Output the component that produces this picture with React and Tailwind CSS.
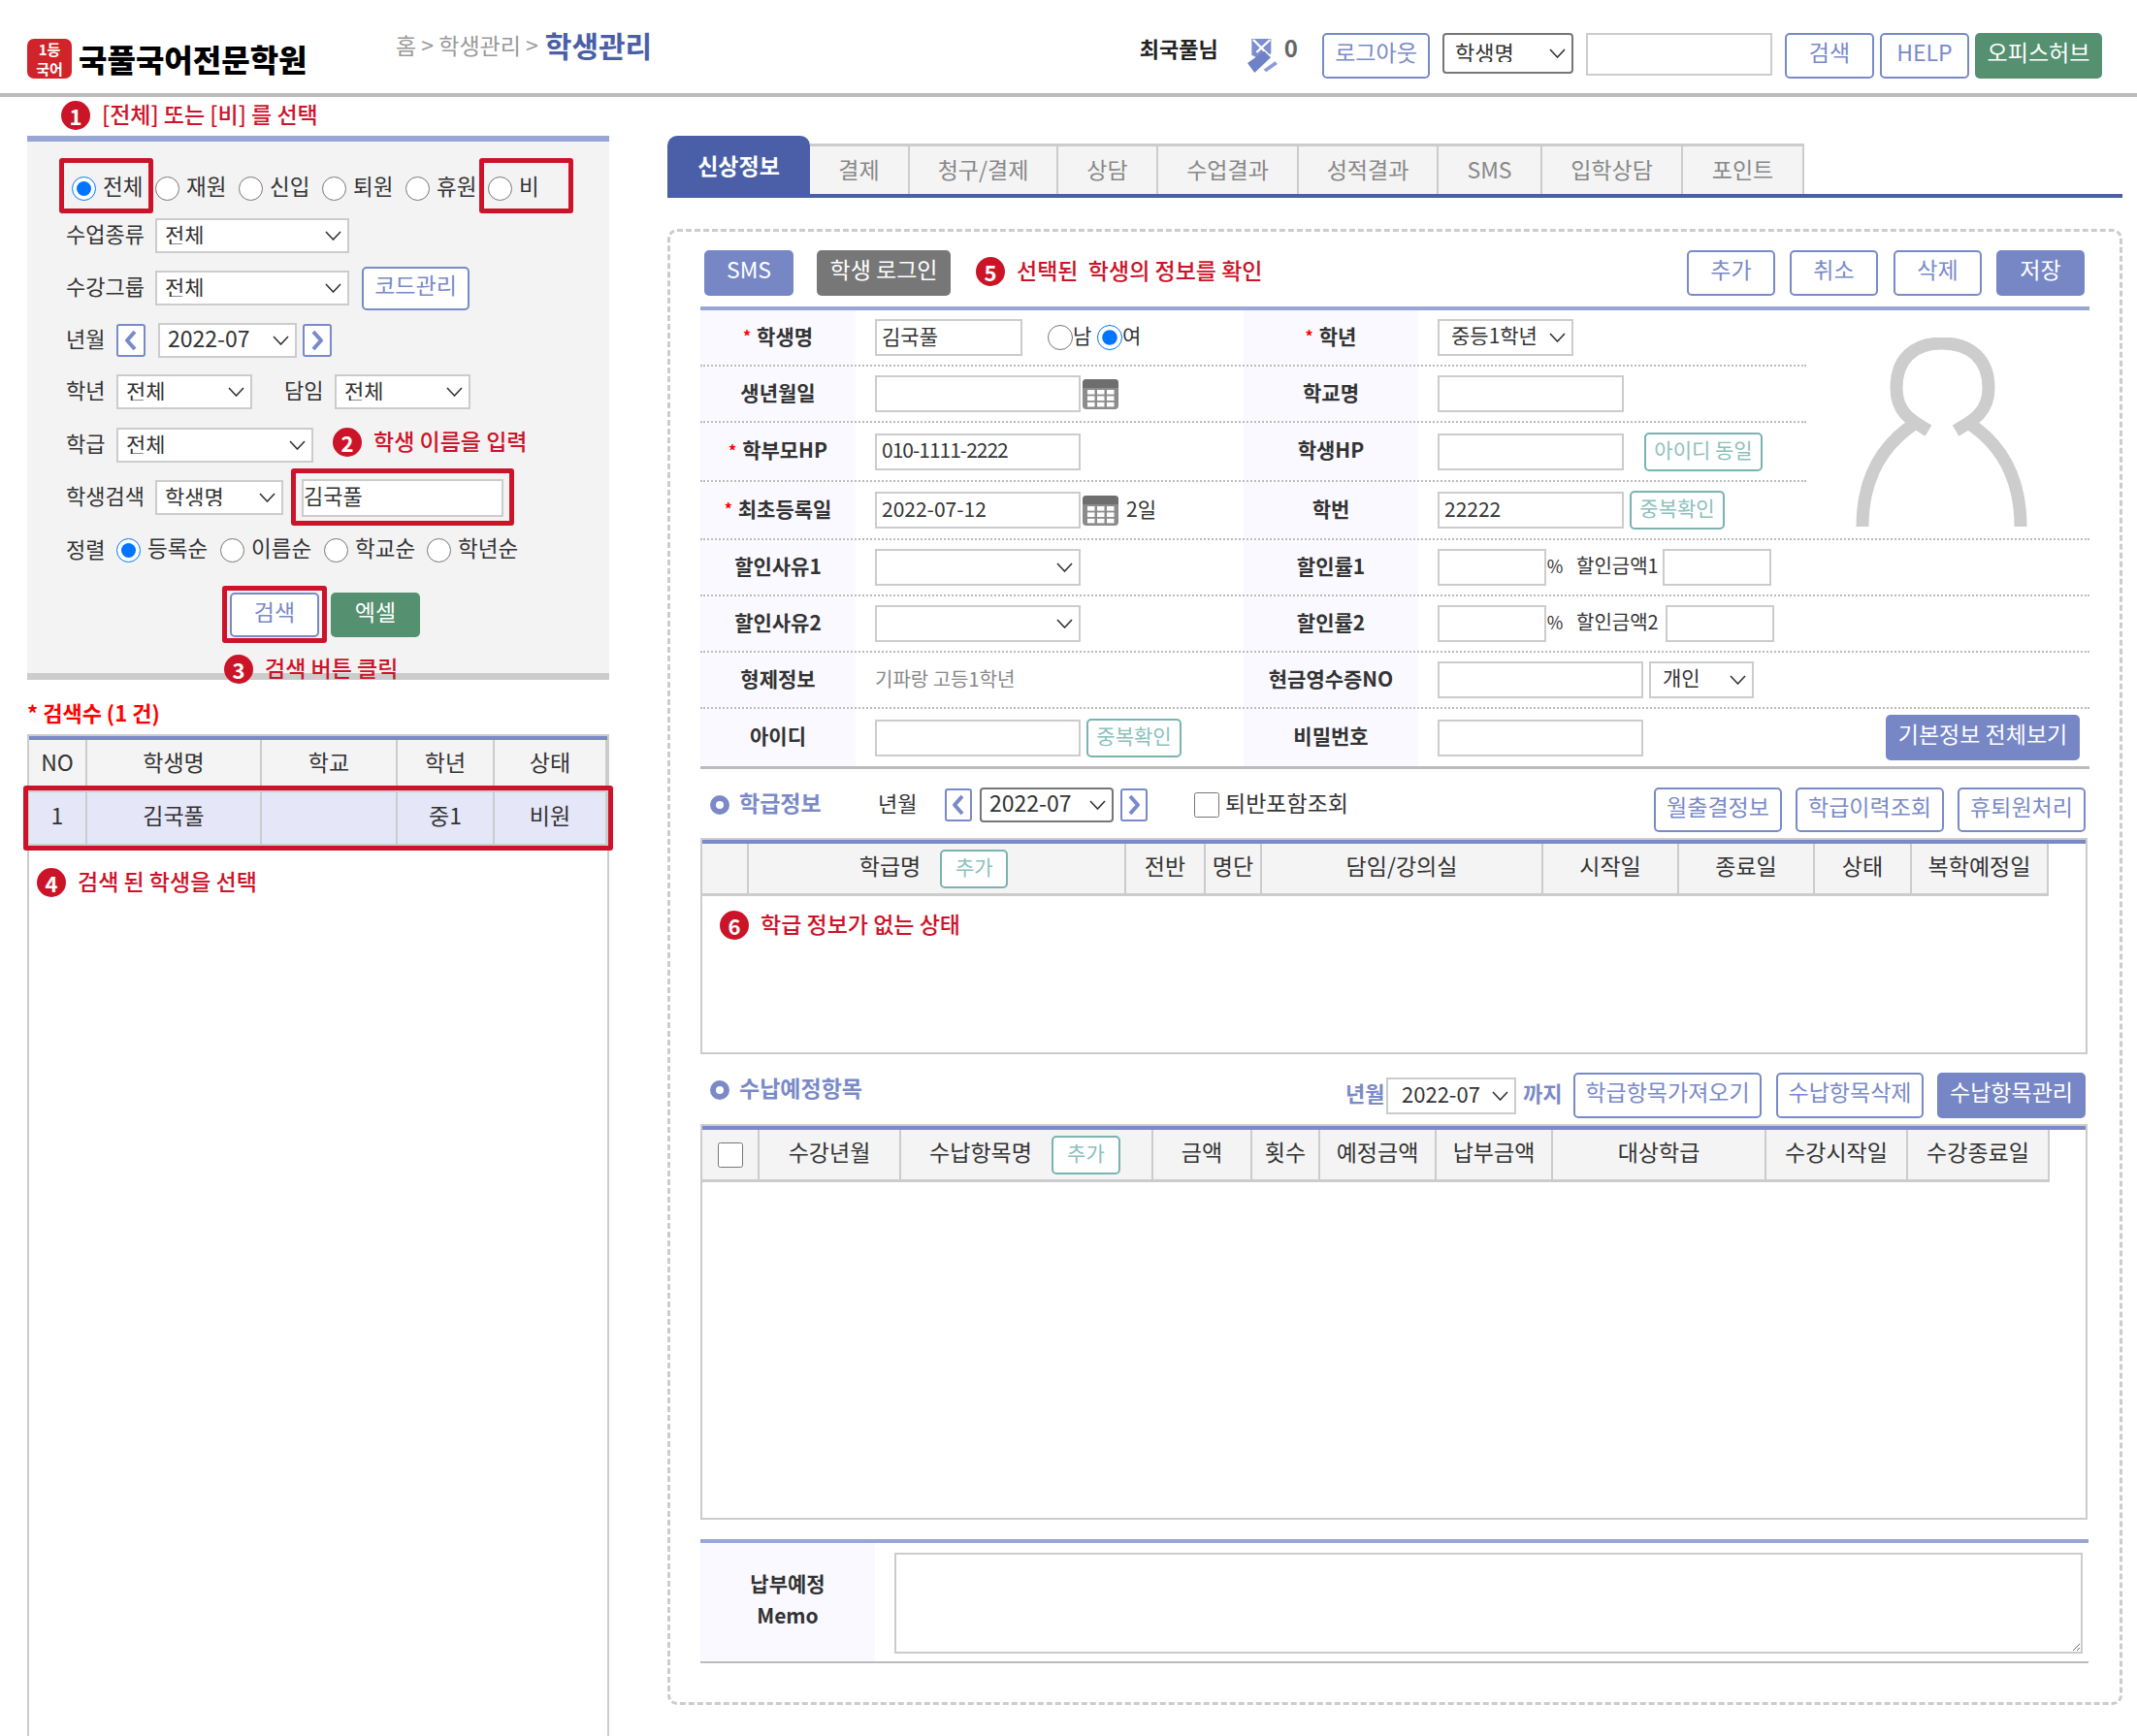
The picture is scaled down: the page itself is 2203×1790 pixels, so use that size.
import React from "react";

const outline = "flex shrink-0 items-center justify-center rounded-[5px] border-2 border-[#7a8ac8] bg-white pb-[8px] text-[23px] leading-none text-[#7a8ac8] whitespace-nowrap";
const fill = "flex shrink-0 items-center justify-center rounded-[5px] bg-[#7787c6] pb-[8px] text-[23px] leading-none text-white whitespace-nowrap";
const green = "flex shrink-0 items-center justify-center rounded-[5px] bg-[#559070] pb-[8px] text-[23px] leading-none text-white whitespace-nowrap";
const teal = "flex shrink-0 items-center justify-center rounded-[5px] border-2 border-[#7ab3b0] bg-white pb-[5px] text-[21px] leading-none text-[#8cc0bd] whitespace-nowrap";
const redBox = "pointer-events-none absolute rounded-[3px] border-[5px] border-[#cd1329]";
const fieldBase = "shrink-0 border-2 border-[#ccc] bg-white px-[5px] pb-[5px] text-[21px] leading-none text-[#333]";
const th = "flex items-center justify-center border-r-2 border-[#ccc] pb-[7px] text-[23px] leading-none text-[#333] whitespace-nowrap";

function Sel({ className, dark = false, size = "text-[22px] pl-[8px]", value }) {
  const border = dark ? "rounded-[4px] border-[#777]" : "border-[#ccc]";
  return (
    <span className={"relative flex shrink-0 " + className}>
      <select defaultValue={value} className={"h-full w-full appearance-none border-2 bg-white pb-[5px] leading-none text-[#333] " + border + " " + size}>
        <option>{value}</option>
      </select>
      <svg width="17" height="10" viewBox="0 0 17 10" fill="none" stroke="#333" strokeWidth="1.6" className="pointer-events-none absolute right-[8px] top-1/2 -translate-y-1/2">
        <polyline points="1,1 8.5,9 16,1" />
      </svg>
    </span>
  );
}

function Badge({ n }) {
  return (
    <span className="flex h-[30px] w-[30px] shrink-0 items-center justify-center rounded-full bg-[#cc1428] text-[22px] font-bold leading-none text-white">
      {n}
    </span>
  );
}

function Note({ n, children, className }) {
  return (
    <div className={"flex h-[30px] items-center " + className}>
      <Badge n={n} />
      <span className="ml-[12px] pb-[3px] text-[23px] font-medium leading-none whitespace-nowrap text-[#cd1329]">{children}</span>
    </div>
  );
}

function Radio({ checked, label, labelW, className = "" }) {
  return (
    <label className={"flex shrink-0 items-center " + className}>
      <input type="radio" defaultChecked={checked} className="m-0 h-[25px] w-[25px] shrink-0" />
      <span className={"ml-[7px] pb-[7px] text-[22.5px] leading-none text-[#333] whitespace-nowrap " + labelW}>{label}</span>
    </label>
  );
}

function Arrow({ dir, className }) {
  return (
    <span className={"flex shrink-0 items-center justify-center rounded-[3px] border-2 border-[#7a8ac8] bg-white " + className}>
      <svg width="14" height="22" viewBox="0 0 14 22" fill="none" stroke="#7a8ac8" strokeWidth="4" strokeLinejoin="round">
        {dir === "l" ? <polyline points="11,2 3,11 11,20" /> : <polyline points="3,2 11,11 3,20" />}
      </svg>
    </span>
  );
}

function Lbl({ children, className = "" }) {
  return <span className={"shrink-0 pb-[6px] text-[22px] leading-none text-[#333] whitespace-nowrap " + className}>{children}</span>;
}

function Calendar() {
  const cells = [];
  for (let r = 0; r < 3; r++) for (let c = 0; c < 3; c++) cells.push(<rect key={r + "-" + c} x={5 + c * 10} y={11 + r * 6.4} width="7.5" height="4.6" fill="#fff" />);
  return (
    <svg width="37" height="31" viewBox="0 0 37 31" className="ml-[2px] shrink-0">
      <rect x="0" y="0" width="37" height="31" rx="4" fill="#8c8c8c" />
      <path d="M0 9V4a4 4 0 0 1 4-4h29a4 4 0 0 1 4 4v5z" fill="#6e6e6e" />
      {cells}
    </svg>
  );
}

function Ribbon() {
  return (
    <svg width="31" height="35" viewBox="0 0 93 105" className="shrink-0">
      <polygon points="13,0 73,0 73,45 43,65 13,50" fill="#7d8ed0" />
      <path d="M18 3L70 55M70 3L28 42" stroke="#fff" strokeWidth="7" />
      <polygon points="0,75 52,38 72,58 22,105" fill="#6f82c8" />
      <polygon points="50,95 85,70 93,78 58,103" fill="#8c9bd6" />
    </svg>
  );
}

function Avatar() {
  return (
    <svg width="177" height="195" viewBox="0 0 177 195" fill="none" stroke="#cdcdcd" strokeWidth="13" className="ml-[51px] mt-[28px] shrink-0">
      <path d="M75 96C58 86 42 78 42 52C42 22 60 6 89 6C118 6 137 22 137 52C137 78 120 86 103 96" />
      <path d="M62 88C28 110 7 145 7 195" />
      <path d="M116 88C150 110 170 145 170 195" />
    </svg>
  );
}

function FormLabel({ req, w, children }) {
  return (
    <div className={"flex shrink-0 items-center justify-center bg-[#f9f9ff] pb-[4px] text-[21px] font-bold leading-none text-[#333] whitespace-nowrap " + w}>
      {req && <span className="mr-[6px] text-[16px] text-[#f00]">*</span>}
      {children}
    </div>
  );
}

function Row({ h, dotted = true, full = false, l1, req1, c1, l2, req2, c2, last = false }) {
  return (
    <div className={"flex " + h + (dotted ? " border-b-2 border-dotted border-[#bbb]" : "") + (last ? " border-b-[3px] border-[#bbb]" : "")}>
      <FormLabel req={req1} w="w-[160px]">{l1}</FormLabel>
      <div className="flex w-[400px] shrink-0 items-center pl-[20px]">{c1}</div>
      <FormLabel req={req2} w="w-[180px]">{l2}</FormLabel>
      <div className={"flex items-center pl-[20px] " + (full ? "flex-1" : "w-[400px] shrink-0")}>{c2}</div>
    </div>
  );
}

const cols1 = ["", "학급명", "전반", "명단", "담임/강의실", "시작일", "종료일", "상태", "복학예정일"];
const w1 = ["w-[48px]", "w-[389px] pr-[6px]", "w-[82px]", "w-[58px]", "w-[290px]", "w-[140px]", "w-[140px]", "w-[100px]", "w-[141px]"];
const cols2 = ["", "수강년월", "수납항목명", "금액", "횟수", "예정금액", "납부금액", "대상학급", "수강시작일", "수강종료일"];
const w2 = ["w-[59px]", "w-[146px]", "w-[260px] pr-[3px]", "w-[102px]", "w-[70px]", "w-[120px]", "w-[120px]", "w-[220px]", "w-[146px]", "w-[146px]"];

function Bullet() {
  return <span className="h-[20px] w-[20px] shrink-0 rounded-full border-[6px] border-[#7a8ac8] bg-white" />;
}

export default function App() {
  return (
    <div className="h-[1790px] w-[2203px] overflow-hidden bg-white font-['Noto_Sans_CJK_KR','Noto_Sans',sans-serif] text-[#333] proportional-nums">
      <header className="flex h-[100px] w-full border-b-4 border-[#bbb]">
        <div className="ml-[28px] mt-[40px] flex h-[41px] w-[46px] shrink-0 flex-col items-center justify-center rounded-[7px] bg-[#d2232a] text-[15px] font-bold leading-[20px] text-white">
          <span className="whitespace-nowrap">1등</span>
          <span className="whitespace-nowrap">국어</span>
        </div>
        <div className="ml-[7px] mt-[38px] w-[242px] shrink-0 text-[32px] font-black leading-[44px] text-black whitespace-nowrap">국풀국어전문학원</div>
        <div className="ml-[85px] mt-[26px] flex h-[40px] shrink-0 items-center whitespace-nowrap">
          <span className="text-[23px] text-[#999]">홈 &gt; 학생관리 &gt;</span>
          <span className="ml-[7px] text-[30px] font-bold text-[#4a5fa8]">학생관리</span>
        </div>
        <div className="ml-auto mr-[36px] mt-[34px] flex items-start">
          <span className="mt-[1px] w-[111px] shrink-0 text-[22px] font-bold leading-[28px] text-[#222] whitespace-nowrap">최국풀님</span>
          <span className="mt-[6px] flex"><Ribbon /></span>
          <span className="ml-[7px] mt-[1px] text-[24px] font-bold leading-[28px] text-[#666]">0</span>
          <button className={outline + " ml-[25px] h-[47px] w-[111px]"}>로그아웃</button>
          <Sel dark size="text-[22px] pl-[11px]" value="학생명" className="ml-[13px] h-[42px] w-[135px]" />
          <input className={fieldBase + " ml-[13px] h-[44px] w-[192px]"} />
          <button className={outline + " ml-[13px] h-[47px] w-[92px]"}>검색</button>
          <button className={outline + " ml-[6px] h-[47px] w-[92px]"}>HELP</button>
          <button className={green + " ml-[6px] h-[47px] w-[131px]"}>오피스허브</button>
        </div>
      </header>

      <main className="flex">
        <aside className="ml-[28px] flex w-[600px] shrink-0 flex-col">
          <Note n="1" className="ml-[35px] mt-[4px]">[전체] 또는 [비] 를 선택</Note>
          <section className="relative mt-[6px] h-[561px] border-b-[7px] border-t-[6px] border-b-[#ccc] border-t-[#98a6d4] bg-[#f3f3f3]">
            <div className="ml-[46px] mt-[36px] flex h-[25px]">
              <Radio checked label="전체" labelW="w-[54px]" />
              <Radio label="재원" labelW="w-[54px]" />
              <Radio label="신입" labelW="w-[54px]" />
              <Radio label="퇴원" labelW="w-[54px]" />
              <Radio label="휴원" labelW="w-[53px]" />
              <Radio label="비" labelW="w-[30px]" />
            </div>
            <div className="ml-[40px] mt-[18px] flex h-[36px] items-center">
              <Lbl className="w-[92px]">수업종류</Lbl>
              <Sel value="전체" className="h-[36px] w-[200px]" />
            </div>
            <div className="ml-[40px] mt-[18px] flex h-[36px] items-center">
              <Lbl className="w-[92px]">수강그룹</Lbl>
              <Sel value="전체" className="h-[36px] w-[200px]" />
              <button className={outline + " ml-[13px] h-[45px] w-[111px]"}>코드관리</button>
            </div>
            <div className="ml-[40px] mt-[18px] flex h-[36px] items-center">
              <Lbl className="w-[52px]">년월</Lbl>
              <Arrow dir="l" className="h-[34px] w-[30px]" />
              <Sel value="2022-07" size="text-[23px] pl-[8px]" className="ml-[13px] h-[36px] w-[143px]" />
              <Arrow dir="r" className="ml-[6px] h-[34px] w-[30px]" />
            </div>
            <div className="ml-[40px] mt-[17px] flex h-[36px] items-center">
              <Lbl className="w-[52px]">학년</Lbl>
              <Sel value="전체" className="h-[36px] w-[140px]" />
              <Lbl className="ml-[33px] w-[52px]">담임</Lbl>
              <Sel value="전체" className="h-[36px] w-[140px]" />
            </div>
            <div className="ml-[40px] mt-[19px] flex h-[36px] items-center">
              <Lbl className="w-[52px]">학급</Lbl>
              <Sel value="전체" className="h-[36px] w-[203px]" />
              <Note n="2" className="-mt-[6px] ml-[20px]">학생 이름을 입력</Note>
            </div>
            <div className="ml-[40px] mt-[18px] flex h-[36px] items-center">
              <Lbl className="w-[92px]">학생검색</Lbl>
              <Sel value="학생명" className="h-[36px] w-[132px]" />
              <input defaultValue="김국풀" className="ml-[19px] h-[39px] w-[208px] shrink-0 border-2 border-[#ccc] bg-white pb-[7px] text-[22px] leading-none text-[#333]" />
            </div>
            <div className="ml-[40px] mt-[24px] flex h-[25px] items-center">
              <Lbl className="w-[52px]">정렬</Lbl>
              <Radio checked label="등록순" labelW="w-[75px]" />
              <Radio label="이름순" labelW="w-[75px]" />
              <Radio label="학교순" labelW="w-[74px]" />
              <Radio label="학년순" labelW="w-[70px]" />
            </div>
            <div className="ml-[209px] mt-[31px] flex">
              <button className={outline + " h-[46px] w-[92px]"}>검색</button>
              <button className={green + " ml-[12px] h-[46px] w-[92px]"}>엑셀</button>
            </div>
            <Note n="3" className="ml-[203px] mt-[18px]">검색 버튼 클릭</Note>
            <div className={redBox + " left-[33px] top-[17px] h-[57px] w-[97px]"} />
            <div className={redBox + " left-[466px] top-[17px] h-[57px] w-[97px]"} />
            <div className={redBox + " left-[272px] top-[337px] h-[59px] w-[230px]"} />
            <div className={redBox + " left-[201px] top-[458px] h-[59px] w-[108px]"} />
          </section>

          <div className="mt-[19px] h-[28px] text-[22px] font-bold leading-[28px] text-[#f00] whitespace-nowrap">* 검색수 (1 건)</div>
          <section className="relative mt-[9px] h-[1033px] border-x-2 border-t-2 border-[#ccc]">
            <div className="border-t-4 border-[#7a8ac8]">
              <div className="flex h-[54px] border-b-[3px] border-[#ccc] bg-[#f4f4f4]">
                <div className={th + " w-[60px]"}>NO</div>
                <div className={th + " w-[180px]"}>학생명</div>
                <div className={th + " w-[140px]"}>학교</div>
                <div className={th + " w-[100px]"}>학년</div>
                <div className={th + " flex-1 border-r-0"}>상태</div>
              </div>
              <div className="flex h-[55px] border-b-2 border-[#ccc] bg-[#e5e6f8]">
                <div className={th + " w-[60px]"}>1</div>
                <div className={th + " w-[180px]"}>김국풀</div>
                <div className={th + " w-[140px]"}></div>
                <div className={th + " w-[100px]"}>중1</div>
                <div className={th + " flex-1 border-r-0"}>비원</div>
              </div>
            </div>
            <Note n="4" className="ml-[8px] mt-[23px]">검색 된 학생을 선택</Note>
            <div className={redBox + " -left-[6px] top-[51px] h-[67px] w-[608px]"} />
          </section>
        </aside>

        <div className="ml-[60px] mt-[40px] flex w-[1500px] shrink-0 flex-col">
          <nav className="flex h-[64px] items-end border-b-4 border-[#4a5fa8]">
            <div className="flex h-[60px] w-[147px] items-center justify-center rounded-t-[10px] bg-[#4a5fa8] text-[23px] font-bold leading-none text-white">신상정보</div>
            {[["결제", "w-[103px]"], ["청구/결제", "w-[153px]"], ["상담", "w-[103px]"], ["수업결과", "w-[145px]"], ["성적결과", "w-[144px]"], ["SMS", "w-[107px]"], ["입학상담", "w-[145px]"], ["포인트", "w-[125px]"]].map(([t, w]) => (
              <div key={t} className={"flex h-[52px] items-center justify-center border-r-2 border-t-[3px] border-[#ccc] bg-[#f4f4f4] pb-[2px] text-[23px] leading-none text-[#888] " + w}>{t}</div>
            ))}
          </nav>

          <div className="mt-[32px] h-[1522px] rounded-[10px] border-[3px] border-dashed border-[#ccc] pl-[31px]">
            <div className="w-[1432px]">
              <div className="mt-[19px] flex h-[47px] items-stretch pl-[4px] pr-[5px]">
                <button className={fill + " w-[92px]"}>SMS</button>
                <button className="ml-[24px] flex w-[138px] shrink-0 items-center justify-center rounded-[5px] bg-[#777] pb-[8px] text-[23px] leading-none text-white whitespace-nowrap">학생 로그인</button>
                <Note n="5" className="-mt-[3px] ml-[26px] self-center">선택된&nbsp; 학생의 정보를 확인</Note>
                <button className={outline + " ml-auto w-[91px]"}>추가</button>
                <button className={outline + " ml-[15px] w-[91px]"}>취소</button>
                <button className={outline + " ml-[16px] w-[91px]"}>삭제</button>
                <button className={fill + " ml-[15px] w-[91px]"}>저장</button>
              </div>

              <div className="mt-[11px] border-t-4 border-[#98a6d4]">
                <div className="flex border-b-2 border-dotted border-[#bbb]">
                  <div className="w-[1140px] shrink-0">
                    <Row h="h-[58px]" req1 l1="학생명" req2 l2="학년"
                      c1={<>
                        <input defaultValue="김국풀" className={fieldBase + " h-[38px] w-[152px]"} />
                        <input type="radio" name="g" className="m-0 ml-[26px] h-[26px] w-[26px]" />
                        <span className="w-[25px] pb-[6px] text-[21px] leading-none">남</span>
                        <input type="radio" name="g" defaultChecked className="m-0 h-[26px] w-[26px]" />
                        <span className="pb-[6px] text-[21px] leading-none">여</span>
                      </>}
                      c2={<Sel size="text-[21px] pl-[12px]" value="중등1학년" className="h-[38px] w-[140px]" />} />
                    <Row h="h-[58px]" l1="생년월일" l2="학교명"
                      c1={<><input className={fieldBase + " h-[38px] w-[212px]"} /><Calendar /></>}
                      c2={<input className={fieldBase + " h-[38px] w-[192px]"} />} />
                    <Row h="h-[61px]" req1 l1="학부모HP" l2="학생HP"
                      c1={<input defaultValue="010-1111-2222" className={fieldBase + " h-[38px] w-[212px] tracking-[-1px]"} />}
                      c2={<><input className={fieldBase + " h-[38px] w-[192px]"} /><button className={teal + " ml-[21px] h-[40px] w-[122px]"}>아이디 동일</button></>} />
                    <Row h="h-[58px]" dotted={false} req1 l1="최초등록일" l2="학번"
                      c1={<><input defaultValue="2022-07-12" className={fieldBase + " h-[38px] w-[212px]"} /><Calendar /><span className="ml-[8px] pb-[4px] text-[21px] leading-none">2일</span></>}
                      c2={<><input defaultValue="22222" className={fieldBase + " h-[38px] w-[192px]"} /><button className={teal + " ml-[6px] h-[40px] w-[98px]"}>중복확인</button></>} />
                  </div>
                  <Avatar />
                </div>
                <Row h="h-[58px]" full l1="할인사유1" l2="할인률1"
                  c1={<Sel value="" className="h-[38px] w-[212px]" />}
                  c2={<><input className={fieldBase + " h-[38px] w-[112px]"} /><span className="w-[18px] shrink-0 pb-[4px] text-center text-[18px] leading-none">%</span><span className="ml-[13px] w-[89px] shrink-0 pb-[4px] text-[20px] leading-none whitespace-nowrap">할인금액1</span><input className={fieldBase + " h-[38px] w-[112px]"} /></>} />
                <Row h="h-[58px]" full l1="할인사유2" l2="할인률2"
                  c1={<Sel value="" className="h-[38px] w-[212px]" />}
                  c2={<><input className={fieldBase + " h-[38px] w-[112px]"} /><span className="w-[18px] shrink-0 pb-[4px] text-center text-[18px] leading-none">%</span><span className="ml-[13px] w-[92px] shrink-0 pb-[4px] text-[20px] leading-none whitespace-nowrap">할인금액2</span><input className={fieldBase + " h-[38px] w-[112px]"} /></>} />
                <Row h="h-[58px]" full l1="형제정보" l2="현금영수증NO"
                  c1={<span className="pb-[2px] text-[20px] leading-none text-[#888] whitespace-nowrap">기파랑 고등1학년</span>}
                  c2={<><input className={fieldBase + " h-[38px] w-[212px]"} /><Sel size="text-[21px] pl-[12px]" value="개인" className="ml-[6px] h-[38px] w-[108px]" /></>} />
                <Row h="h-[62px]" full dotted={false} last l1="아이디" l2="비밀번호"
                  c1={<><input className={fieldBase + " h-[38px] w-[212px]"} /><button className={teal + " ml-[6px] h-[40px] w-[98px]"}>중복확인</button></>}
                  c2={<><input className={fieldBase + " h-[38px] w-[212px]"} /><button className={fill + " ml-auto mr-[10px] h-[47px] w-[200px]"}>기본정보 전체보기</button></>} />
              </div>

              <div className="mt-[19px] flex h-[46px] items-start pl-[10px] pr-[4px]">
                <div className="flex h-[36px] items-center">
                  <Bullet />
                  <span className="ml-[10px] w-[83px] shrink-0 pb-[6px] text-[23px] font-bold leading-none text-[#7a8ac8] whitespace-nowrap">학급정보</span>
                  <Lbl className="ml-[60px] w-[40px]">년월</Lbl>
                  <Arrow dir="l" className="ml-[29px] h-[34px] w-[28px]" />
                  <Sel dark size="text-[23px] pl-[8px]" value="2022-07" className="ml-[8px] h-[36px] w-[138px]" />
                  <Arrow dir="r" className="ml-[7px] h-[34px] w-[28px]" />
                  <input type="checkbox" className="m-0 ml-[48px] h-[26px] w-[26px] shrink-0" />
                  <span className="ml-[6px] shrink-0 pb-[5px] text-[23px] leading-none whitespace-nowrap">퇴반포함조회</span>
                </div>
                <button className={outline + " ml-auto h-[46px] w-[132px]"}>월출결정보</button>
                <button className={outline + " ml-[14px] h-[46px] w-[153px]"}>학급이력조회</button>
                <button className={outline + " ml-[14px] h-[46px] w-[132px]"}>휴퇴원처리</button>
              </div>

              <div className="mt-[6px] h-[223px] w-[1430px] border-2 border-[#ccc]">
                <div className="border-t-4 border-[#7a8ac8]">
                  <div className="flex h-[54px] w-[1388px] border-b-[3px] border-[#ccc] bg-[#f4f4f4]">
                    {cols1.map((c, i) => (
                      <div key={i} className={th + " " + w1[i]}>
                        {c}
                        {i === 1 && <button className={teal + " -mb-[7px] ml-[20px] h-[40px] w-[70px]"}>추가</button>}
                      </div>
                    ))}
                  </div>
                </div>
                <Note n="6" className="ml-[18px] mt-[15px]">학급 정보가 없는 상태</Note>
              </div>

              <div className="mt-[19px] flex h-[47px] items-start pl-[10px] pr-[4px]">
                <div className="flex h-[36px] items-center">
                  <Bullet />
                  <span className="ml-[10px] shrink-0 pb-[6px] text-[23px] font-bold leading-none text-[#7a8ac8] whitespace-nowrap">수납예정항목</span>
                </div>
                <div className="ml-auto flex h-[47px] items-center">
                  <span className="w-[42px] shrink-0 pb-[8px] text-[22px] font-bold leading-none text-[#7a8ac8] whitespace-nowrap">년월</span>
                  <Sel size="text-[22px] pl-[14px]" value="2022-07" className="h-[38px] w-[134px]" />
                  <span className="ml-[7px] w-[41px] shrink-0 pb-[8px] text-[22px] font-bold leading-none text-[#7a8ac8] whitespace-nowrap">까지</span>
                  <button className={outline + " ml-[11px] h-[47px] w-[194px]"}>학급항목가져오기</button>
                  <button className={outline + " ml-[15px] h-[47px] w-[152px]"}>수납항목삭제</button>
                  <button className={fill + " ml-[14px] h-[47px] w-[153px]"}>수납항목관리</button>
                </div>
              </div>

              <div className="mt-[6px] h-[408px] w-[1430px] border-2 border-[#ccc]">
                <div className="border-t-4 border-[#7a8ac8]">
                  <div className="flex h-[54px] w-[1389px] border-b-[3px] border-[#ccc] bg-[#f4f4f4]">
                    {cols2.map((c, i) => (
                      <div key={i} className={th + " " + w2[i]}>
                        {i === 0 && <input type="checkbox" className="m-0 -mb-[7px] h-[26px] w-[26px]" />}
                        {c}
                        {i === 2 && <button className={teal + " -mb-[7px] ml-[20px] h-[40px] w-[71px]"}>추가</button>}
                      </div>
                    ))}
                  </div>
                </div>
              </div>

              <div className="mt-[20px] flex h-[128px] w-[1431px] border-b-2 border-t-4 border-b-[#bbb] border-t-[#98a6d4]">
                <div className="flex w-[180px] shrink-0 flex-col items-center justify-center bg-[#f9f9ff] pb-[6px] text-[21px] font-bold leading-[33px] text-[#333]">
                  <span>납부예정</span>
                  <span>Memo</span>
                </div>
                <textarea className="ml-[20px] mt-[10px] h-[104px] w-[1225px] border-2 border-[#ccc] bg-white" />
              </div>
            </div>
          </div>
        </div>
      </main>
    </div>
  );
}
